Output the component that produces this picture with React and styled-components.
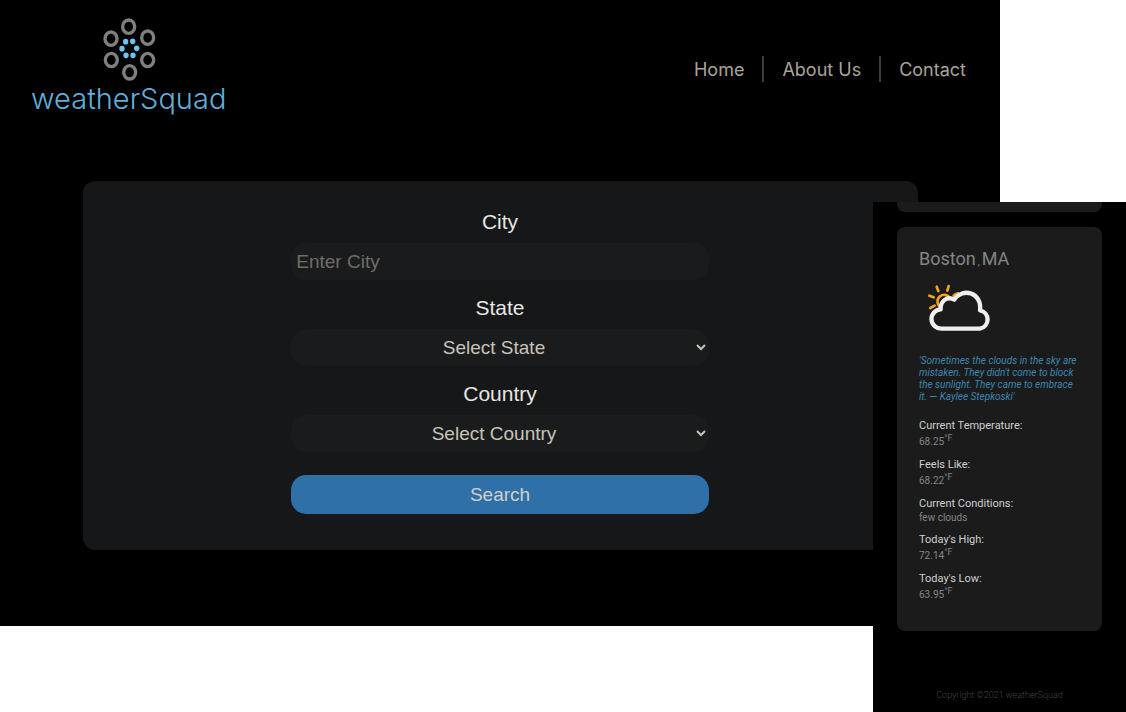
import React from 'react';
import styled, { createGlobalStyle } from 'styled-components';

const GlobalStyle = createGlobalStyle`
  *, *::before, *::after { box-sizing: border-box; }
  body { margin: 0; background: #fff; }
`;

const Page = styled.div`
  position: relative;
  min-height: 100vh;
  padding-right: 126px;
`;

const Desktop = styled.div`
  padding-bottom: 76px;
  background: #000;
  font-family: "Liberation Sans", Arial, sans-serif;
`;

const Header = styled.header`
  display: flex;
  align-items: center;
  justify-content: space-between;
  padding: 15px 34px 15px 31px;
  margin-bottom: 43px;
`;

const Logo = styled.a`
  display: flex;
  flex-direction: column;
  align-items: center;
  padding-bottom: 8px;
  text-decoration: none;
`;

const LogoMark = styled.svg`
  width: 66px;
  height: 68px;
`;

const LogoText = styled.span`
  font: 300 29px/32px Inter, sans-serif;
  color: #60afd9;
`;

const Nav = styled.nav`
  display: flex;
`;

const NavLink = styled.a`
  padding: 2px 18px 0;
  border-left: 2px solid #3f3b35;
  font: 400 18px/24px Inter, sans-serif;
  color: #aaa499;
  text-decoration: none;

  &:first-child { border-left: 0; }
  &:last-child { padding-right: 0; }
`;

const SearchForm = styled.form`
  width: 83.5%;
  margin: 0 auto;
  padding: 28px 0 36px;
  display: flex;
  flex-direction: column;
  align-items: center;
  gap: 15px;
  border-radius: 12px;
  background: #151718;
`;

const Field = styled.div`
  width: 50%;
  display: flex;
  flex-direction: column;
  gap: 8px;
`;

const Label = styled.label`
  font-size: 21px;
  line-height: 26px;
  text-align: center;
  color: #e8e6e3;
`;

const controlStyles = `
  width: 100%;
  height: 37px;
  border: 0;
  border-radius: 15px;
  background: #191b1c;
  font-family: inherit;
  font-size: 19px;
  color: #c8c3ba;
`;

const TextInput = styled.input`
  ${controlStyles}
  padding: 0 5px;

  &::placeholder { color: #706c67; opacity: 1; }
`;

const Select = styled.select`
  ${controlStyles}
  text-align-last: center;
`;

const SearchButton = styled.button`
  width: 50%;
  height: 39px;
  margin-top: 8px;
  border: 0;
  border-radius: 15px;
  background: #2f70a8;
  font-family: inherit;
  font-size: 19px;
  color: #d3cfc9;
`;

const Phone = styled.aside`
  position: absolute;
  top: 202px;
  right: 0;
  bottom: 0;
  width: 253px;
  padding: 0 24px;
  background: #000;
  font-family: Roboto, sans-serif;
`;

const CardEnd = styled.div`
  height: 10px;
  margin-bottom: 15px;
  border-radius: 0 0 8px 8px;
  background: #1b1b1b;
`;

const WeatherCard = styled.article`
  padding: 20px 20px 28px 22px;
  border-radius: 8px;
  background: #1b1b1b;
`;

const Place = styled.h2`
  margin: 0;
  font-size: 18px;
  line-height: 24px;
  font-weight: 400;
  color: #858585;
`;

const Comma = styled.span`
  margin: 0 2px;
  font-size: 10px;
  line-height: 10px;
`;

const WeatherIcon = styled.svg`
  display: block;
  width: 80px;
  height: 60px;
  margin: 7px 0 17px;
`;

const Quote = styled.p`
  margin: 0 0 16px;
  font-size: 10px;
  line-height: 12px;
  font-style: italic;
  color: #3d87b3;
`;

const Readings = styled.dl`
  display: flex;
  flex-direction: column;
  gap: 8px;
  margin: 0;
`;

const Term = styled.dt`
  font-size: 11px;
  line-height: 14px;
  color: #d0d0d0;
`;

const Value = styled.dd`
  margin: 0;
  padding: ${(p) => (p.$degrees ? '2px 0 1px' : '0')};
  font-size: 10px;
  line-height: 14px;
  color: #858585;
`;

const Unit = styled.sup`
  font-size: 9px;
  line-height: 0;
`;

const Copyright = styled.footer`
  padding: 57px 0 10px;
  font-size: 9px;
  line-height: 14px;
  font-weight: 300;
  text-align: center;
  color: #444;
`;

const rings = [[98, 35], [155, 68], [155, 135], [101, 172], [46, 135], [45, 71]];
const dots = [[89, 80], [110, 79], [122, 100], [111, 121], [90, 121], [78, 101]];

const readings = [
  { term: 'Current Temperature:', value: '68.25', degrees: true },
  { term: 'Feels Like:', value: '68.22', degrees: true },
  { term: 'Current Conditions:', value: 'few clouds', degrees: false },
  { term: "Today's High:", value: '72.14', degrees: true },
  { term: "Today's Low:", value: '63.95', degrees: true },
];

export default function App() {
  return (
    <Page>
      <GlobalStyle />
      <Desktop>
        <Header>
          <Logo href="#">
            <LogoMark viewBox="0 0 198 204" aria-hidden="true">
              {rings.map(([x, y]) => (
                <ellipse key={`${x}-${y}`} cx={x} cy={y} rx="18" ry="20" fill="none" stroke="#808080" strokeWidth="10" />
              ))}
              {dots.map(([x, y]) => (
                <ellipse key={`${x}-${y}`} cx={x} cy={y} rx="8" ry="8.5" fill="#6cc3f4" />
              ))}
            </LogoMark>
            <LogoText>weatherSquad</LogoText>
          </Logo>
          <Nav>
            <NavLink href="#home">Home</NavLink>
            <NavLink href="#about">About Us</NavLink>
            <NavLink href="#contact">Contact</NavLink>
          </Nav>
        </Header>
        <SearchForm>
          <Field>
            <Label htmlFor="city">City</Label>
            <TextInput id="city" type="text" placeholder="Enter City" />
          </Field>
          <Field>
            <Label htmlFor="state">State</Label>
            <Select id="state"><option>Select State</option></Select>
          </Field>
          <Field>
            <Label htmlFor="country">Country</Label>
            <Select id="country"><option>Select Country</option></Select>
          </Field>
          <SearchButton type="button">Search</SearchButton>
        </SearchForm>
      </Desktop>
      <Phone>
        <CardEnd />
        <WeatherCard>
          <Place>Boston<Comma>,</Comma>MA</Place>
          <WeatherIcon viewBox="138 249 240 180" fill="none" strokeLinecap="round" aria-hidden="true">
            <g stroke="#f5a31d" strokeWidth="8">
              <path d="M198 333A20 20 0 1 1 230 307M242 302Q247 296 255 295" />
              <path d="M191 275L196 288M227 273L223 287M169 302L182 307M172 339L185 332" />
            </g>
            <path
              d="M206 401A29 29 0 0 1 203 343C202 318 222 302 244 314C268 276 328 292 321 346A28 28 0 0 1 321 401Z"
              stroke="#eee"
              strokeWidth="13"
              strokeLinejoin="round"
            />
          </WeatherIcon>
          <Quote>
            'Sometimes the clouds in the sky are mistaken. They didn't come to block the sunlight. They came to embrace it. — Kaylee Stepkoski'
          </Quote>
          <Readings>
            {readings.map((r) => (
              <div key={r.term}>
                <Term>{r.term}</Term>
                <Value $degrees={r.degrees}>
                  {r.value}
                  {r.degrees && <Unit>°F</Unit>}
                </Value>
              </div>
            ))}
          </Readings>
        </WeatherCard>
        <Copyright>Copyright ©2021 weatherSquad</Copyright>
      </Phone>
    </Page>
  );
}
